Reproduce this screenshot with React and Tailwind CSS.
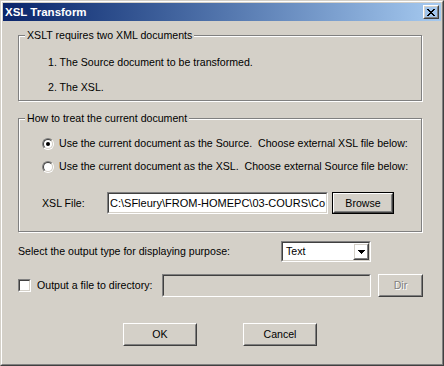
import React from 'react'

const sunkenOuter = 'border border-t-[#808080] border-l-[#808080] border-b-white border-r-white'
const sunkenInner = 'border border-t-[#404040] border-l-[#404040] border-b-[#d4d0c8] border-r-[#d4d0c8]'
const raisedOuter = 'border border-t-white border-l-white border-b-[#404040] border-r-[#404040]'
const raisedInner = 'border border-t-[#d4d0c8] border-l-[#d4d0c8] border-b-[#808080] border-r-[#808080]'

function CloseGlyph() {
  const rows = ['XX....XX', '.XX..XX.', '..XXXX..', '...XX...', '..XXXX..', '.XX..XX.', 'XX....XX']
  return (
    <svg width="8" height="7" viewBox="0 0 8 7" shapeRendering="crispEdges">
      {rows.map((r, y) =>
        r.split('').map((c, x) => (c === 'X' ? <rect key={`${x}-${y}`} x={x} y={y} width="1" height="1" fill="#000" /> : null))
      )}
    </svg>
  )
}

function Button({ children, className = '', disabled = false, outlined = false }) {
  const btn = (
    <div className={`h-full ${raisedOuter}`}>
      <div className={`flex h-full items-center justify-center ${raisedInner}`}>
        {disabled ? (
          <span className="text-[#808080] [text-shadow:1px_1px_0_#fff]">{children}</span>
        ) : (
          <span>{children}</span>
        )}
      </div>
    </div>
  )
  if (outlined) return <div className={`border border-black ${className}`}>{btn}</div>
  return <div className={className}>{btn}</div>
}

function Radio({ checked }) {
  return (
    <div className="h-[12px] w-[12px] shrink-0 rounded-full border border-t-[#808080] border-l-[#808080] border-b-white border-r-white">
      <div className="flex h-full w-full items-center justify-center rounded-full border border-t-[#404040] border-l-[#404040] border-b-[#d4d0c8] border-r-[#d4d0c8] bg-white">
        {checked && <div className="h-[4px] w-[4px] rounded-full bg-black" />}
      </div>
    </div>
  )
}

function Group({ label, className = '', children }) {
  return (
    <div className={`w-[404px] border border-[#808080] shadow-[1px_1px_0_#fff,inset_1px_1px_0_#fff] ${className}`}>
      <div className="-mt-[7px] ml-[6px] w-fit bg-[#d4d0c8] px-[2px]">{label}</div>
      {children}
    </div>
  )
}

export default function App() {
  return (
    <div className="h-[366px] w-[444px] overflow-hidden whitespace-nowrap bg-[#d4d0c8] font-['Liberation_Sans',Arial,sans-serif] text-[10.6px] leading-[13px] text-black">
      <div className="h-full border border-t-[#d4d0c8] border-l-[#d4d0c8] border-b-[#404040] border-r-[#404040]">
        <div className="h-full border border-t-white border-l-white border-b-[#808080] border-r-[#808080] p-px">
          <div className="flex h-[18px] items-center justify-between bg-linear-to-r from-[#0a246a] to-[#a6caf0] pl-[2px] pr-[2px]">
            <span className="text-[11.5px] font-bold text-white">XSL Transform</span>
            <div className={`h-[14px] w-[16px] ${raisedOuter}`}>
              <div className={`flex h-full items-center justify-center ${raisedInner}`}>
                <CloseGlyph />
              </div>
            </div>
          </div>

          <div className="pl-[15px] pt-[14px]">
            <Group label="XSLT requires two XML documents" className="pb-[6px]">
              <div className="ml-[29px] mt-[14px]">1. The Source document to be transformed.</div>
              <div className="ml-[29px] mt-[12px]">2. The XSL.</div>
            </Group>

            <Group label="How to treat the current document" className="mt-[17px] pb-[17px]">
              <div className="ml-[23px] mt-[12px] flex items-center gap-[5px]">
                <Radio checked />
                <span>Use the current document as the Source.&nbsp; Choose external XSL file below:</span>
              </div>
              <div className="ml-[23px] mt-[10px] flex items-center gap-[5px]">
                <Radio />
                <span>Use the current document as the XSL.&nbsp; Choose external Source file below:</span>
              </div>
              <div className="ml-[23px] mt-[19px] flex h-[22px] items-center">
                <span className="w-[65px] shrink-0">XSL File:</span>
                <div className={`h-full w-[221px] ${sunkenOuter}`}>
                  <div className={`flex h-full items-center overflow-hidden bg-white pl-[1px] text-[11px] ${sunkenInner}`}>
                    C:\SFleury\FROM-HOMEPC\03-COURS\Co
                  </div>
                </div>
                <Button outlined className="ml-[4px] h-full w-[62px]">Browse</Button>
              </div>
            </Group>

            <div className="mt-[9px] flex h-[21px] items-center">
              <span className="w-[263px] shrink-0">Select the output type for displaying purpose:</span>
              <div className={`h-full w-[90px] ${sunkenOuter}`}>
                <div className={`flex h-full items-center bg-white ${sunkenInner}`}>
                  <span className="flex-1 pl-[3px]">Text</span>
                  <div className={`h-full w-[16px] ${raisedOuter}`}>
                    <div className={`flex h-full items-center justify-center ${raisedInner}`}>
                      <svg width="7" height="4" viewBox="0 0 7 4" shapeRendering="crispEdges">
                        <path d="M0 0h7v1H0zM1 1h5v1H1zM2 2h3v1H2zM3 3h1v1H3z" fill="#000" />
                      </svg>
                    </div>
                  </div>
                </div>
              </div>
            </div>

            <div className="mt-[12px] flex h-[23px] items-center">
              <div className={`h-[13px] w-[13px] shrink-0 ${sunkenOuter}`}>
                <div className={`h-full bg-white ${sunkenInner}`} />
              </div>
              <span className="ml-[6px] w-[125px] shrink-0">Output a file to directory:</span>
              <div className={`h-full w-[209px] ${sunkenOuter}`}>
                <div className={`h-full bg-[#d4d0c8] ${sunkenInner}`} />
              </div>
              <Button disabled className="ml-[7px] h-full w-[45px]">Dir</Button>
            </div>

            <div className="mt-[26px] flex h-[23px]">
              <Button className="ml-[105px] h-full w-[74px]">OK</Button>
              <Button className="ml-[46px] h-full w-[74px]">Cancel</Button>
            </div>
          </div>
        </div>
      </div>
    </div>
  )
}
